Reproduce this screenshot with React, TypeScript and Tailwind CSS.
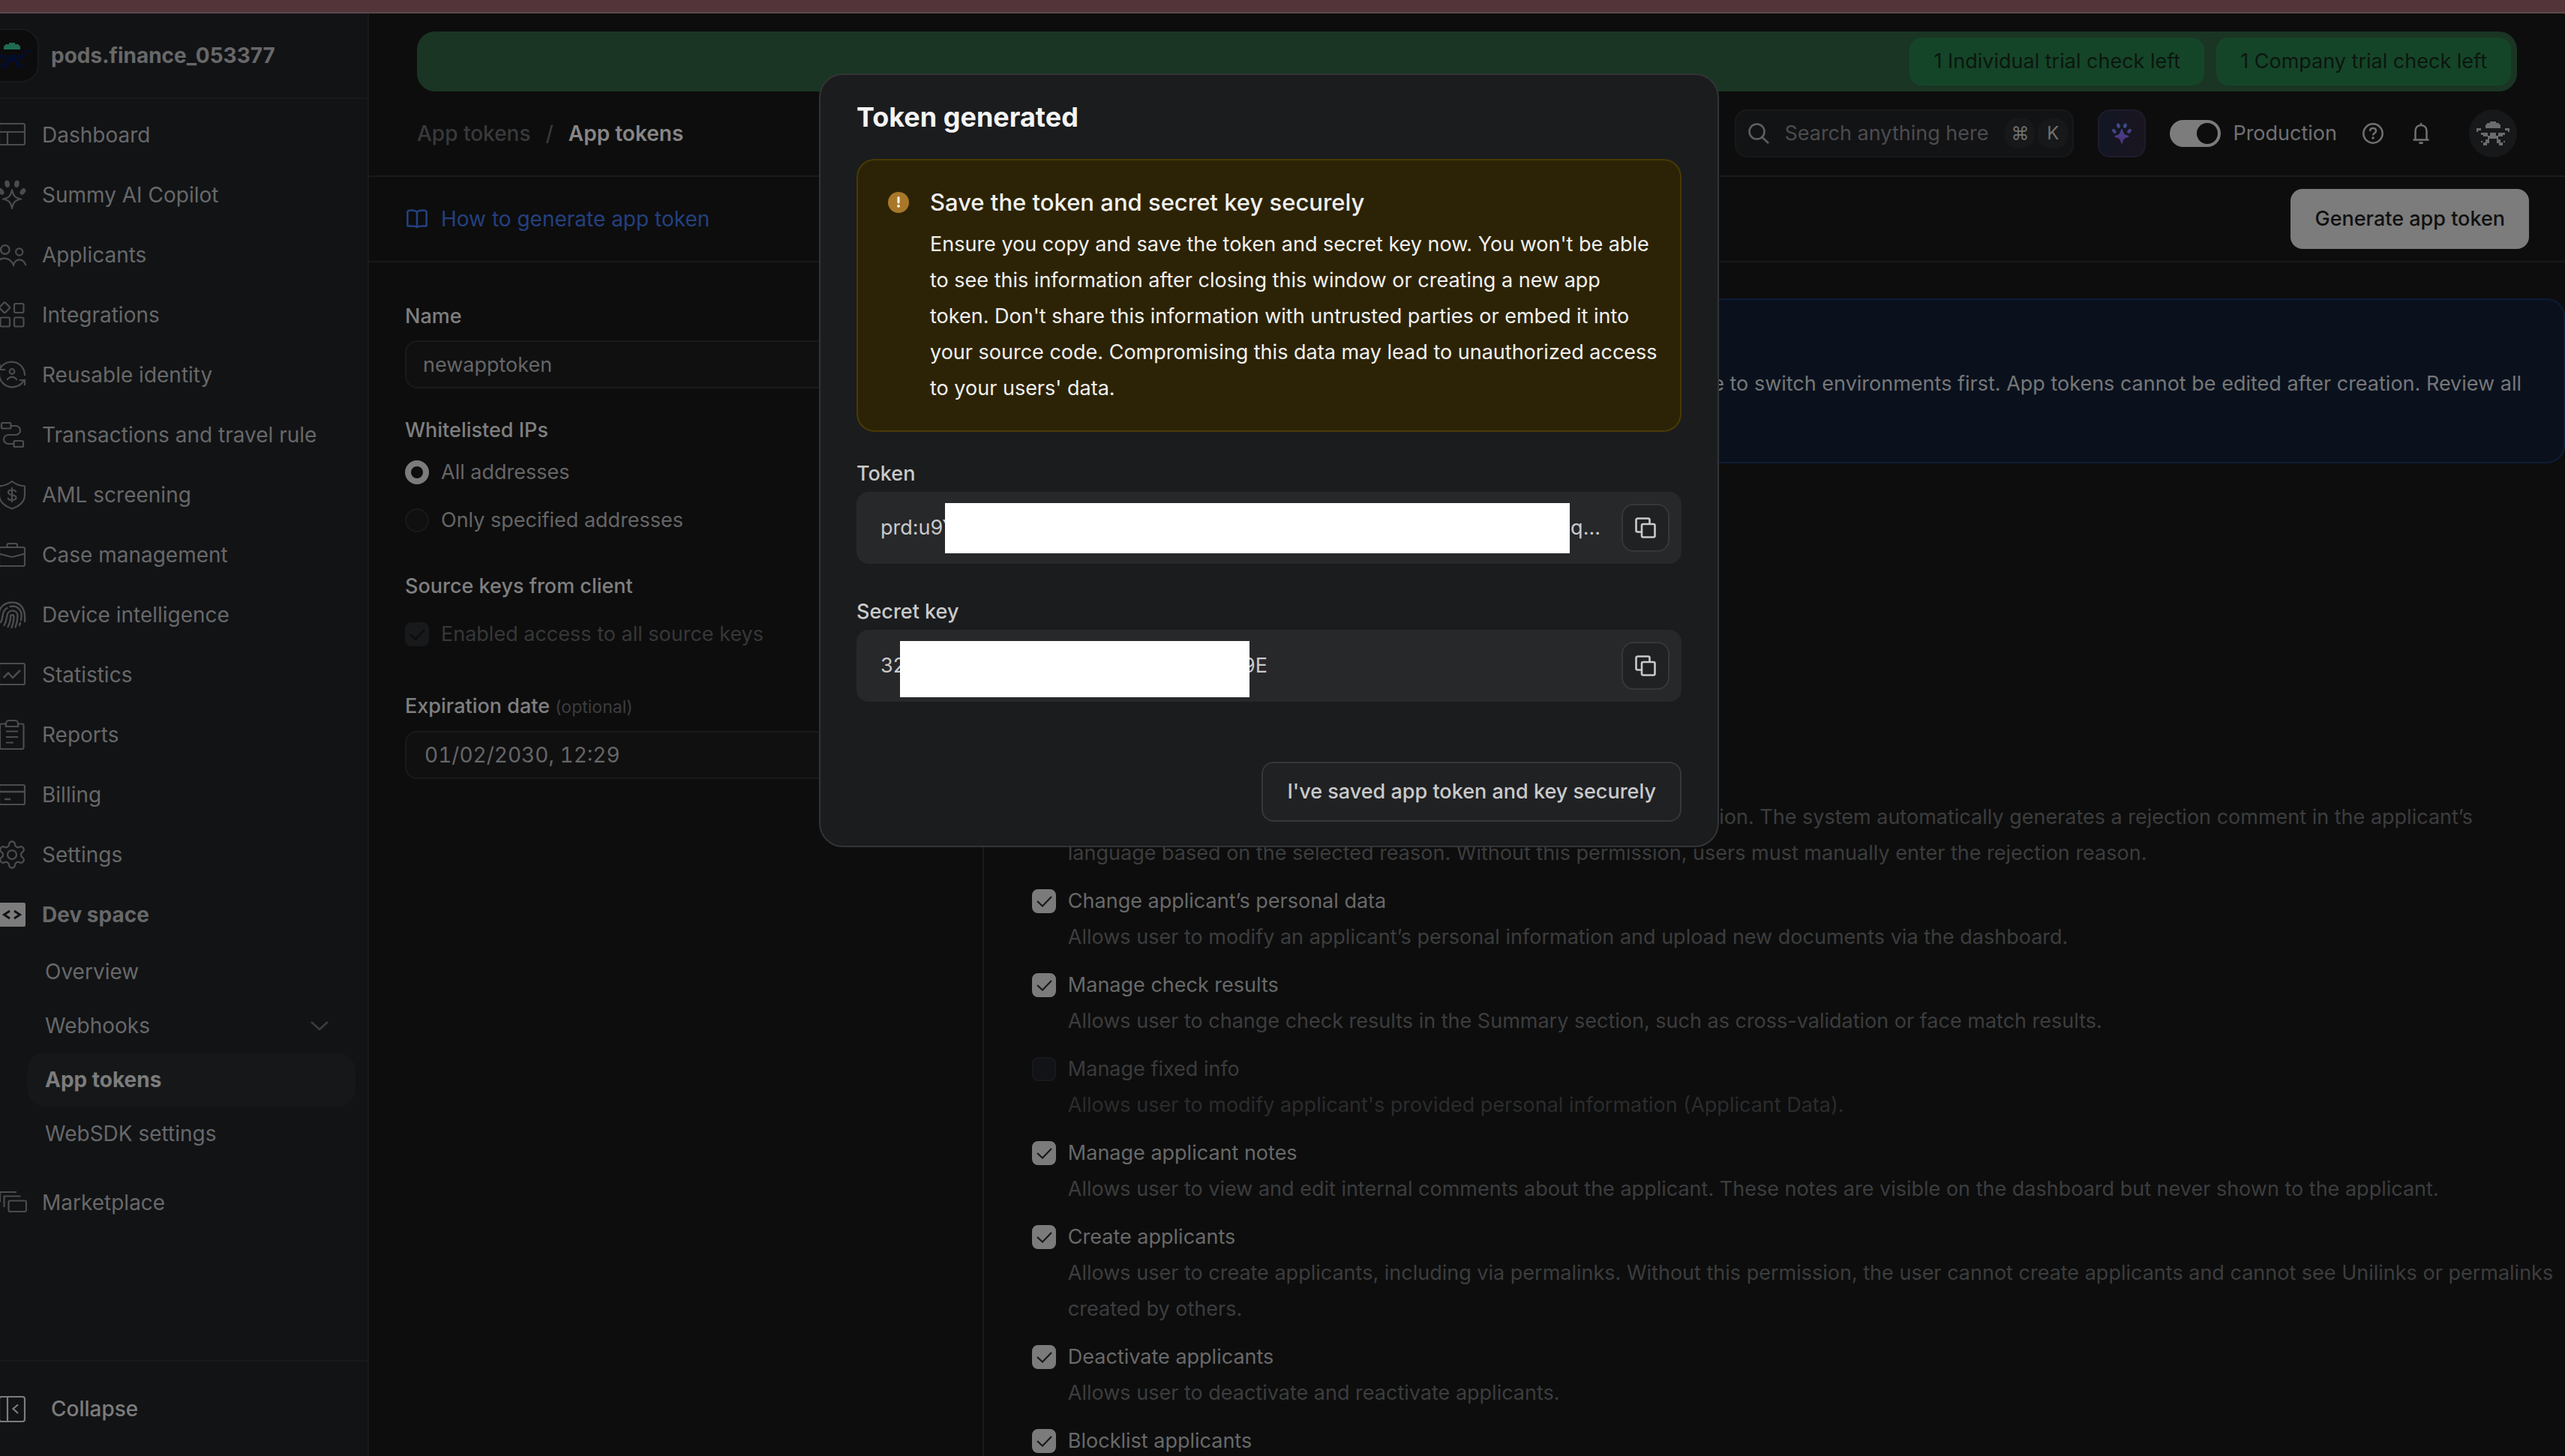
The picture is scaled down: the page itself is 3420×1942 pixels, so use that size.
import { ReactNode, useState } from "react";

type IconProps = { children: ReactNode; className?: string };

const Icon = ({ children, className = "size-10 text-[#4b4c4e]" }: IconProps) => (
  <svg
    viewBox="0 0 40 40"
    fill="none"
    stroke="currentColor"
    strokeWidth="2.2"
    className={`shrink-0 ${className}`}
    aria-hidden="true"
  >
    {children}
  </svg>
);

const GEAR =
  "M12.22 2h-.44a2 2 0 0 0-2 2v.18a2 2 0 0 1-1 1.73l-.43.25a2 2 0 0 1-2 0l-.15-.08a2 2 0 0 0-2.73.73l-.22.38a2 2 0 0 0 .73 2.73l.15.1a2 2 0 0 1 1 1.72v.51a2 2 0 0 1-1 1.74l-.15.09a2 2 0 0 0-.73 2.73l.22.38a2 2 0 0 0 2.73.73l.15-.08a2 2 0 0 1 2 0l.43.25a2 2 0 0 1 1 1.73V20a2 2 0 0 0 2 2h.44a2 2 0 0 0 2-2v-.18a2 2 0 0 1 1-1.73l.43-.25a2 2 0 0 1 2 0l.15.08a2 2 0 0 0 2.73-.73l.22-.39a2 2 0 0 0-.73-2.73l-.15-.08a2 2 0 0 1-1-1.74v-.5a2 2 0 0 1 1-1.74l.15-.09a2 2 0 0 0 .73-2.73l-.22-.38a2 2 0 0 0-2.73-.73l-.15.08a2 2 0 0 1-2 0l-.43-.25a2 2 0 0 1-1-1.73V4a2 2 0 0 0-2-2z";

const STAR = "M20 13C21.5 21 24 24 32 25.5C24 27 21.5 30 20 38C18.500 30 16 27 8 25.500C16 24 18.500 21 20 13Z";

const Petals = ({ fill }: { fill: string }) => (
  <g fill={fill} stroke="none">
    <ellipse cx="13.600" cy="5.300" rx="3.300" ry="4.700" transform="rotate(-12 13.600 5.300)" />
    <ellipse cx="26.400" cy="5.300" rx="3.300" ry="4.700" transform="rotate(12 26.400 5.300)" />
    <ellipse cx="5.600" cy="15.500" rx="3.200" ry="4.700" transform="rotate(-38 5.600 15.500)" />
    <ellipse cx="34.400" cy="15.500" rx="3.200" ry="4.700" transform="rotate(38 34.400 15.500)" />
  </g>
);

const navItems = [
  {
    label: "Dashboard",
    icon: (
      <Icon>
        <rect x="3" y="5" width="34" height="28" rx="2" />
        <path d="M3 16H37M14 16V33" />
      </Icon>
    ),
  },
  {
    label: "Summy AI Copilot",
    icon: (
      <Icon>
        <Petals fill="currentColor" />
        <path d={STAR} strokeLinejoin="round" />
      </Icon>
    ),
  },
  {
    label: "Applicants",
    icon: (
      <Icon>
        <circle cx="10.800" cy="13" r="5.800" />
        <circle cx="29.700" cy="16" r="4.600" />
        <path d="M0 31C4 22 17 22 22 33.500C25 24 35 24 38.500 34" />
      </Icon>
    ),
  },
  {
    label: "Integrations",
    icon: (
      <Icon>
        <rect x="5" y="5" width="10.500" height="10.500" rx="1.500" transform="rotate(45 10.250 10.250)" />
        <rect x="23" y="5" width="12.500" height="12" rx="2" />
        <rect x="4.500" y="23.500" width="12.500" height="12" rx="2" />
        <rect x="23" y="23.500" width="12.500" height="12" rx="2" />
      </Icon>
    ),
  },
  {
    label: "Reusable identity",
    icon: (
      <Icon>
        <path d="M4 12A17.500 17.500 0 0 1 37 21M3 19A17.500 17.500 0 0 0 36 27" />
        <path d="M30 27H37V34M11 13H4V6" />
        <circle cx="20" cy="15.500" r="3.300" />
        <path d="M13.500 27C16 21.500 24 21.500 26.500 27" />
      </Icon>
    ),
  },
  {
    label: "Transactions and travel rule",
    icon: (
      <Icon>
        <rect x="6" y="4" width="12.500" height="7.500" rx="1.500" />
        <rect x="22.500" y="28" width="12.500" height="8" rx="1.500" />
        <path d="M18.500 8H25A6 6 0 0 1 25 20H15A6 6 0 0 0 15 32H22.500" />
      </Icon>
    ),
  },
  {
    label: "AML screening",
    icon: (
      <Icon>
        <path
          d="M20 2C15 6 9 8 3 8.500V20C3 29 10 35 20 38.500C30 35 37 29 37 20V8.500C31 8 25 6 20 2Z"
          strokeLinejoin="round"
        />
        <path d="M25.500 16.500C25 14.500 23 13.500 20 13.500C17 13.500 15 14.600 15 16.800C15 19 17 19.700 20 20.200C23 20.700 25.500 21.500 25.500 23.800C25.500 26 23 27 20 27C17 27 14.800 26 14.500 24M20 10V30" />
      </Icon>
    ),
  },
  {
    label: "Case management",
    icon: (
      <Icon>
        <rect x="3" y="10" width="34" height="25" rx="2" />
        <path d="M13.500 10V7A2 2 0 0 1 15.500 5H25A2 2 0 0 1 27 7V10M3 18.500L18 22.500Q20 23 22 22.500L37 18.500" />
      </Icon>
    ),
  },
  {
    label: "Device intelligence",
    icon: (
      <Icon>
        <g strokeLinecap="round" strokeWidth="2.400">
          <path d="M3 22C1.500 10 10 3.500 20.500 3.500C31 3.500 38.500 11 37 29" />
          <path d="M5 30C8 25 7 21 8.500 17C9.500 14 11 12 13.500 11" />
          <path d="M17.500 9C26 7 33 13 32.500 21C32.500 23 32.500 24.500 32 27M31 31L30 34" />
          <path d="M9.500 34C13 28 12.500 24 13.500 20.500C15.500 12 27.500 12.500 27.500 21.500C27.500 28 26 33 24.500 36.500" />
          <path d="M14.500 36C18 30 18 26 18 22.500C18 19.500 22.500 19.500 22.500 22.500C22.500 29 21 33.500 19.500 37" />
        </g>
      </Icon>
    ),
  },
  {
    label: "Statistics",
    icon: (
      <Icon>
        <rect x="3" y="5" width="34" height="28" rx="2" />
        <path d="M8.600 24L15 17.500L21 24L31 14" strokeWidth="2.500" />
      </Icon>
    ),
  },
  {
    label: "Reports",
    icon: (
      <Icon>
        <path d="M12 5.500H6A2 2 0 0 0 4 7.500V37A2 2 0 0 0 6 39H33.500A2 2 0 0 0 35.500 37V7.500A2 2 0 0 0 33.500 5.500H28" />
        <path d="M12 9V5A4 4 0 0 1 16 1H24A4 4 0 0 1 28 5V9Z" />
        <path d="M12 15.500H28M12 23H28M12 30.500H22" />
      </Icon>
    ),
  },
  {
    label: "Billing",
    icon: (
      <Icon>
        <rect x="3" y="7" width="34" height="26" rx="2" />
        <path d="M3 16H37M10 26H18" strokeWidth="2.500" />
      </Icon>
    ),
  },
  {
    label: "Settings",
    icon: (
      <Icon>
        <g transform="translate(-1 -1) scale(1.750)" strokeWidth="1.300">
          <path d={GEAR} />
          <circle cx="12" cy="12" r="3.400" />
        </g>
      </Icon>
    ),
  },
];

const permissions = [
  {
    label: "Reject applicants",
    text: "Allows user to reject applicants and choose the reason for the rejection. The system automatically generates a rejection comment in the applicant’s language based on the selected reason. Without this permission, users must manually enter the rejection reason.",
    checked: true,
  },
  {
    label: "Change applicant’s personal data",
    text: "Allows user to modify an applicant’s personal information and upload new documents via the dashboard.",
    checked: true,
  },
  {
    label: "Manage check results",
    text: "Allows user to change check results in the Summary section, such as cross-validation or face match results.",
    checked: true,
  },
  {
    label: "Manage fixed info",
    text: "Allows user to modify applicant's provided personal information (Applicant Data).",
    checked: false,
  },
  {
    label: "Manage applicant notes",
    text: "Allows user to view and edit internal comments about the applicant. These notes are visible on the dashboard but never shown to the applicant.",
    checked: true,
  },
  {
    label: "Create applicants",
    text: "Allows user to create applicants, including via permalinks. Without this permission, the user cannot create applicants and cannot see Unilinks or permalinks created by others.",
    checked: true,
  },
  {
    label: "Deactivate applicants",
    text: "Allows user to deactivate and reactivate applicants.",
    checked: true,
  },
  {
    label: "Blocklist applicants",
    text: "Allows user to add applicants to the blocklist.",
    checked: true,
  },
];

const PixelFigure = ({ hat, body, className }: { hat: string; body: string; className: string }) => (
  <svg viewBox="0 0 22 16" className={className} shapeRendering="crispEdges" aria-hidden="true">
    <path fill={hat} d="M9 0h4v1h2v1h1v2.500H6V2h1V1h2z" />
    <path
      fill={body}
      d="M0 4.500h3v1.500H1v1H0zM22 4.500h-3v1.500h2v1h1zM3 7.500h4.500v2.500H4.500v-1H3zM19 7.500h-4.500v2.500h3v-1H19zM9 7.500h4v2h1.500v2.500H16v2h1.500v2H15v-1.500h-1.500v-3h-5v3H7v1.500H4.500V14H6v-2h1.500V9.500H9zM3 13h1v1H3zM18 13h1v1h-1z"
    />
  </svg>
);

const CheckBox = ({ id, checked, disabled }: { id: string; checked: boolean; disabled?: boolean }) => {
  const [on, setOn] = useState(checked);
  return (
    <span className="grid size-8 shrink-0">
      <input
        id={id}
        type="checkbox"
        checked={on}
        disabled={disabled}
        onChange={() => setOn(!on)}
        className="col-start-1 row-start-1 size-8 appearance-none rounded-lg border-2 border-[#18191c] bg-[#121316] checked:border-[#7b7b7b] checked:bg-[#7b7b7b] checked:disabled:border-[#18191b] checked:disabled:bg-[#18191b]"
      />
      {on && (
        <svg
          viewBox="0 0 32 32"
          fill="none"
          strokeWidth="2"
          className={`pointer-events-none col-start-1 row-start-1 size-8 ${
            disabled ? "stroke-[#0b0b0b]" : "stroke-[#161616]"
          }`}
        >
          <path d="M7 16L14 22.500L26 10" />
        </svg>
      )}
    </span>
  );
};

const CopyButton = ({ label }: { label: string }) => (
  <button
    aria-label={label}
    className="flex size-16 shrink-0 items-center justify-center rounded-2xl border-2 border-[#363739] bg-[#202123]"
  >
    <svg viewBox="0 0 28 28" fill="none" stroke="#c9cacb" strokeWidth="2.600" className="size-7">
      <rect x="9" y="9" width="17.500" height="17.500" rx="2" />
      <path d="M19.500 9V3.500A2 2 0 0 0 17.500 1.500H3.500A2 2 0 0 0 1.500 3.500V17.500A2 2 0 0 0 3.500 19.500H9" />
    </svg>
  </button>
);

const Sidebar = () => (
  <aside className="flex w-[492px] shrink-0 flex-col overflow-hidden border-r-2 border-[#191a1c] bg-[#121315] text-[28px] leading-10 text-[#676869]">
    <div className="flex h-[114px] shrink-0 items-center gap-4 border-b-2 border-[#191a1c]">
      <div className="-ml-5 flex size-18 shrink-0 items-center justify-center rounded-3xl border-2 border-[#191a1b] bg-[#0c0c0c]">
        <PixelFigure hat="#1e6b51" body="#020d2e" className="h-9 w-12" />
      </div>
      <span className="font-bold">pods.finance_053377</span>
    </div>
    <nav className="flex-1 pt-2">
      {navItems.map((item) => (
        <a key={item.label} href="#" className="-ml-1 flex h-20 items-center gap-5">
          {item.icon}
          {item.label}
        </a>
      ))}
      <a href="#" className="-ml-1 flex h-20 items-center gap-5 font-bold">
        <Icon className="size-10 text-[#7c7c7c]">
          <rect x="2" y="4" width="36" height="32" rx="2" fill="currentColor" stroke="none" />
          <path d="M17 15L9.500 20L17 25M23 15L30.500 20L23 25" stroke="#121315" strokeWidth="3" />
        </Icon>
        Dev space
      </a>
      <div className="mr-4 ml-9">
        <a href="#" className="flex h-18 items-center px-6">
          Overview
        </a>
        <a href="#" className="flex h-18 items-center justify-between pr-9 pl-6">
          Webhooks
          <svg viewBox="0 0 24 24" fill="none" stroke="#3b3c3e" strokeWidth="2.500" className="size-6">
            <path d="M1 7L12 17L23 7" />
          </svg>
        </a>
        <a href="#" className="flex h-18 items-center rounded-3xl bg-[#161719] px-6 font-bold text-[#7c7c7c]">
          App tokens
        </a>
        <a href="#" className="flex h-18 items-center px-6">
          WebSDK settings
        </a>
      </div>
      <a href="#" className="mt-4 -ml-1 flex h-20 items-center gap-5">
        <Icon>
          <rect x="15.500" y="17.500" width="23.500" height="14.500" rx="2" />
          <path d="M9.500 26V11.500H31.500M4 19.500V6H26" />
        </Icon>
        Marketplace
      </a>
    </nav>
    <button className="flex h-32 shrink-0 items-center gap-8 border-t-2 border-[#191a1c] font-medium text-[#7c7c7c]">
      <Icon className="-ml-1 size-10">
        <rect x="3" y="4" width="34" height="33" rx="3" />
        <path d="M14 4V37M28 14.500L21.500 20L28 26" />
      </Icon>
      Collapse
    </button>
  </aside>
);

const Header = () => {
  const [production, setProduction] = useState(true);
  return (
    <header className="flex h-[114px] shrink-0 items-center justify-between border-b-2 border-[#191a1b] px-16">
      <div className="flex gap-5 text-[28px] leading-10 font-medium text-[#38393b]">
        <a href="#">App tokens</a>
        <span>/</span>
        <span className="font-semibold text-[#868686]">App tokens</span>
      </div>
      <div className="flex items-center gap-8 text-[#707172]">
        <label className="flex h-16 w-[452px] items-center gap-1 rounded-2xl border-2 border-[#18191b] bg-[#121315] pr-1.5 pl-4">
          <svg viewBox="0 0 28 28" fill="none" stroke="#5e5f61" strokeWidth="2.600" className="mr-4 size-7 shrink-0">
            <circle cx="11.500" cy="11.500" r="10" />
            <path d="M18.500 19L27 27" />
          </svg>
          <input
            type="text"
            aria-label="Search"
            placeholder="Search anything here"
            className="w-full min-w-0 outline-none placeholder:text-[#4b4c4e]"
          />
          <kbd className="flex size-10 shrink-0 items-center justify-center rounded-2xl bg-[#17181a] font-['Inter','DejaVu_Sans',sans-serif] text-2xl">
            ⌘
          </kbd>
          <kbd className="flex size-10 shrink-0 items-center justify-center rounded-2xl bg-[#17181a] font-['Inter',sans-serif] text-2xl">
            K
          </kbd>
        </label>
        <button
          aria-label="AI Copilot"
          className="flex size-16 items-center justify-center rounded-2xl border-2 border-[#1f1b2b] bg-linear-to-r from-[#121624] to-[#1a151f]"
        >
          <svg viewBox="0 0 40 40" className="h-7 w-7">
            <linearGradient id="paw" x1="0" y1="0" x2="0" y2="40" gradientUnits="userSpaceOnUse">
              <stop stopColor="#39508b" />
              <stop offset="1" stopColor="#512c7c" />
            </linearGradient>
            <Petals fill="url(#paw)" />
            <path d={STAR} fill="url(#paw)" stroke="url(#paw)" strokeWidth="3" strokeLinejoin="round" />
          </svg>
        </button>
        <div className="flex items-center gap-4">
          <button
            role="switch"
            aria-checked={production}
            aria-labelledby="env-label"
            onClick={() => setProduction(!production)}
            className={`flex h-9 w-[68px] rounded-full bg-[#7c7c7c] p-1 ${
              production ? "justify-end" : "justify-start"
            }`}
          >
            <span className="size-7 rounded-full bg-[#0d0d0d]" />
          </button>
          <span id="env-label">Production</span>
        </div>
        <button aria-label="Help">
          <svg viewBox="0 0 32 32" fill="none" stroke="currentColor" strokeWidth="2.500" className="size-8">
            <circle cx="16" cy="16" r="12.700" />
            <path d="M12 13C12 10.500 13.500 9 16 9C18.500 9 20 10.500 20 12.700C20 15.500 16 15.500 16 18.500" />
            <circle cx="16" cy="22" r="1.800" fill="currentColor" stroke="none" />
          </svg>
        </button>
        <button aria-label="Notifications">
          <svg viewBox="0 0 32 32" fill="none" stroke="currentColor" strokeWidth="2.500" className="size-8">
            <path d="M5.500 24.500H26.500M8.500 24V13C8.500 8 11.500 5 16 5C20.500 5 23.500 8 23.500 13V24M16 2V5" />
            <ellipse cx="16" cy="28.500" rx="3" ry="1.500" fill="currentColor" stroke="none" />
          </svg>
        </button>
        <button aria-label="Profile" className="ml-4 flex size-16 items-center justify-center rounded-full bg-[#17181a]">
          <PixelFigure hat="#6b6c6d" body="#6b6c6d" className="h-8 w-11" />
        </button>
      </div>
    </header>
  );
};

const TokenForm = () => (
  <form className="w-[28%] shrink-0 border-r-2 border-[#191a1b] px-12 pt-12 text-[#656667]">
    <label htmlFor="name" className="block font-medium leading-12 text-[#7f7f80]">
      Name
    </label>
    <input
      id="name"
      type="text"
      defaultValue="newapptoken"
      className="mt-2 h-16 w-full rounded-2xl border-2 border-[#191a1b] bg-[#101011] px-5.5"
    />
    <fieldset className="mt-8">
      <legend className="font-medium leading-12 text-[#7f7f80]">Whitelisted IPs</legend>
      <label className="mt-2 flex h-12 items-center gap-4">
        <input
          type="radio"
          name="ips"
          defaultChecked
          className="size-8 appearance-none rounded-full border-2 border-[#191a1b] bg-[#101011] checked:border-8 checked:border-[#7c7c7c] checked:bg-[#0d0d0d]"
        />
        All addresses
      </label>
      <label className="mt-4 flex h-12 items-center gap-4">
        <input
          type="radio"
          name="ips"
          className="size-8 appearance-none rounded-full border-2 border-[#191a1b] bg-[#101011] checked:border-8 checked:border-[#7c7c7c]"
        />
        Only specified addresses
      </label>
    </fieldset>
    <h2 className="mt-10 font-medium leading-12 text-[#7f7f80]">Source keys from client</h2>
    <div className="mt-4 flex h-12 items-center gap-4 text-[#363738]">
      <CheckBox id="source-keys" checked disabled />
      <label htmlFor="source-keys">Enabled access to all source keys</label>
    </div>
    <label htmlFor="expiration" className="mt-12 block font-medium leading-12 text-[#7f7f80]">
      Expiration date <span className="text-[23px] font-normal text-[#3c3d3e]">(optional)</span>
    </label>
    <input
      id="expiration"
      type="text"
      defaultValue="01/02/2030, 12:29"
      className="mt-2 h-16 w-full rounded-2xl border-2 border-[#191a1b] bg-[#101011] px-6 text-[28px] tabular-nums"
    />
  </form>
);

const Permissions = () => (
  <section className="min-w-0 flex-1 pt-12 pl-16">
    <div className="rounded-3xl border-2 border-[#0d1d38] bg-[#0a111d] py-8 pr-14 pl-24 leading-12 text-[#767778]">
      <h2 className="font-medium">Production environment</h2>
      <p className="mt-2 text-right">
        Make sure to switch environments first. App tokens cannot be edited after creation. Review all
      </p>
      <p>permissions before you continue.</p>
    </div>
    <ul className="mt-100 flex flex-col gap-4 leading-12">
      {permissions.map((item, index) => (
        <li
          key={item.label}
          className={`flex gap-4 ${item.checked ? "text-[#3c3d3e]" : "text-[#2b2c2d]"}`}
        >
          <span className="flex h-12 items-center">
            <CheckBox id={`permission-${index}`} checked={item.checked} disabled={!item.checked} />
          </span>
          <div>
            <label
              htmlFor={`permission-${index}`}
              className={item.checked ? "text-[#686969]" : "text-[#3a3b3c]"}
            >
              {item.label}
            </label>
            <p>{item.text}</p>
          </div>
        </li>
      ))}
    </ul>
  </section>
);

const TokenDialog = () => (
  <div className="fixed inset-0 flex items-start justify-center pt-[98px] pr-9">
    <div
      role="dialog"
      aria-modal="true"
      aria-labelledby="dialog-title"
      className="w-[1200px] rounded-4xl border-2 border-[#333436] bg-[#1b1c1e] px-12 pt-8 pb-8 text-[#c9cacb]"
    >
      <h1 id="dialog-title" className="text-4xl leading-12 font-bold text-[#f4f4f4]">
        Token generated
      </h1>
      <div className="mt-8 flex gap-7 rounded-3xl border-2 border-[#483a05] bg-[#2c2306] py-8 pr-7 pl-10 text-[#f1f1ee]">
        <svg viewBox="0 0 28 28" className="mt-2.5 size-7 shrink-0" aria-hidden="true">
          <circle cx="14" cy="14" r="14" fill="#a87828" />
          <path d="M14 7.500V14" stroke="#fff" strokeWidth="3" strokeLinecap="round" />
          <circle cx="14" cy="18.800" r="1.900" fill="#fff" />
        </svg>
        <div className="leading-12">
          <h2 className="text-[31px] leading-12 font-medium">Save the token and secret key securely</h2>
          <p className="mt-2">
            Ensure you copy and save the token and secret key now. You won't be able to see this information after
            closing this window or creating a new app token. Don't share this information with untrusted parties or
            embed it into your source code. Compromising this data may lead to unauthorized access to your users'
            data.
          </p>
        </div>
      </div>
      <h3 className="mt-8 leading-12 font-medium">Token</h3>
      <div className="flex h-24 items-center rounded-2xl bg-[#27282a] pr-4 pl-8">
        <span className="w-[86px] shrink-0 overflow-hidden">prd:u9Y</span>
        <span className="h-[67px] flex-1 bg-white" />
        <span className="mr-7 flex w-[41px] shrink-0 justify-end overflow-hidden">6q...</span>
        <CopyButton label="Copy token" />
      </div>
      <h3 className="mt-10 leading-12 font-medium">Secret key</h3>
      <div className="flex h-24 items-center rounded-2xl bg-[#27282a] pr-4 pl-8">
        <span className="w-[26px] shrink-0 overflow-hidden">32</span>
        <span className="mt-2 h-[75px] w-[466px] bg-white" />
        <span className="flex w-6 shrink-0 justify-end overflow-hidden">9E</span>
        <span className="ml-auto">
          <CopyButton label="Copy secret key" />
        </span>
      </div>
      <div className="mt-20 flex justify-end">
        <button className="h-20 rounded-2xl border-2 border-[#363739] bg-[#202123] px-8 font-medium">
          I've saved app token and key securely
        </button>
      </div>
    </div>
  </div>
);

const App = () => {
  return (
    <div className="flex h-screen flex-col overflow-hidden bg-[#0d0d0d] font-['Inter',sans-serif] text-[27px] leading-10">
      <div className="h-[18px] shrink-0 border-b-2 border-[#5a494b] bg-[#523439]" />
      <div className="flex min-h-0 flex-1">
        <Sidebar />
        <main className="flex min-w-0 flex-1 flex-col">
          <div className="shrink-0 px-16 pt-6">
            <div className="flex h-20 items-center justify-end gap-4 rounded-3xl bg-[#1a3524] p-2 text-[#0b1610]">
              <a href="#" className="flex h-16 items-center rounded-2xl bg-[#154528] px-8">
                1 Individual trial check left
              </a>
              <a href="#" className="flex h-16 items-center rounded-2xl bg-[#154528] px-8">
                1 Company trial check left
              </a>
            </div>
          </div>
          <Header />
          <div className="flex h-[114px] shrink-0 items-center justify-between border-b-2 border-[#191a1b] px-12">
            <a href="#" className="flex items-center gap-4 text-[28px] leading-10 text-[#24407f]">
              <svg viewBox="0 0 32 32" fill="none" stroke="currentColor" strokeWidth="2.600" className="size-8">
                <path
                  d="M16 7C14.500 5 11 4.500 8 4.500C5 4.500 3.300 5.500 3.300 7V24.500C3.300 26 5 25.500 8 25.500C11 25.500 14.500 25.500 16 27C17.500 25.500 21 25.500 24 25.500C27 25.500 28.700 26 28.700 24.500V7C28.700 5.500 27 4.500 24 4.500C21 4.500 17.500 5 16 7ZM16 7V27"
                  strokeLinejoin="round"
                />
              </svg>
              How to generate app token
            </a>
            <button className="h-20 rounded-2xl bg-[#7c7c7c] px-8 font-medium text-[#101010]">
              Generate app token
            </button>
          </div>
          <div className="flex min-h-0 flex-1">
            <TokenForm />
            <Permissions />
          </div>
        </main>
      </div>
      <TokenDialog />
    </div>
  );
};

export default App;
